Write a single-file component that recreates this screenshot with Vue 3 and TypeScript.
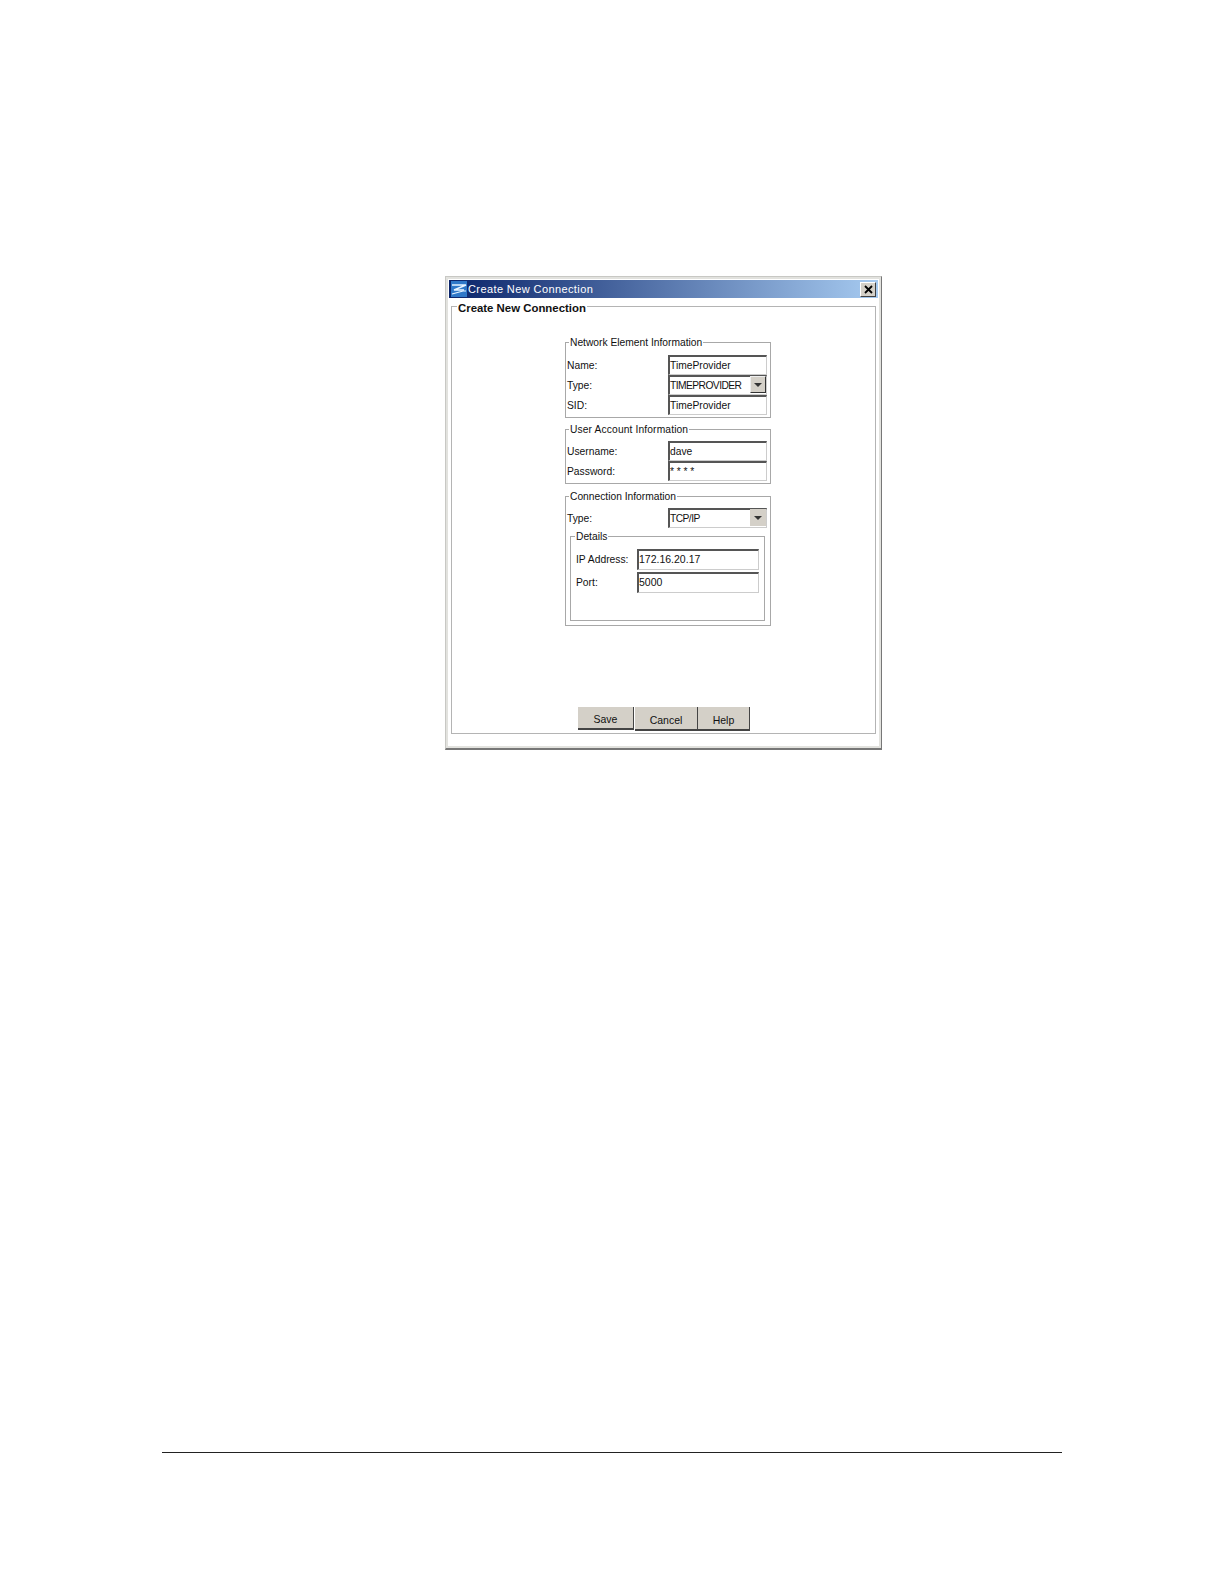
<script setup lang="ts">
const neRows = [
  { label: 'Name:', value: 'TimeProvider' },
  { label: 'Type:', value: 'TIMEPROVIDER', select: true },
  { label: 'SID:', value: 'TimeProvider' },
]
const userRows = [
  { label: 'Username:', value: 'dave' },
  { label: 'Password:', value: '****', stars: true },
]
const detailRows = [
  { label: 'IP Address:', value: '172.16.20.17' },
  { label: 'Port:', value: '5000' },
]
</script>

<template>
  <div class="page">
    <div class="dialog">
      <div class="titlebar">
        <svg class="logo" width="16" height="16" viewBox="0 0 16 16">
          <rect width="16" height="16" fill="#2f78c8" />
          <path d="M1 4H15L3 9H13" fill="none" stroke="#e8f4ff" stroke-width="1.4" />
          <path d="M1 13L12 10H15" fill="none" stroke="#e8f4ff" stroke-width="1.2" />
        </svg>
        <span class="title">Create New Connection</span>
        <div class="close">
          <svg width="9" height="9" viewBox="0 0 9 9">
            <path d="M1 1L8 8M8 1L1 8" stroke="#000" stroke-width="1.8" />
          </svg>
        </div>
      </div>
      <fieldset class="panel">
        <legend class="panel-legend"><span>Create New Connection</span></legend>
        <div class="form">
          <fieldset class="group ne">
            <legend>Network Element Information</legend>
            <div v-for="r in neRows" :key="r.label" class="row">
              <span class="label">{{ r.label }}</span>
              <div class="field">
                <span :class="{ caps: r.select }">{{ r.value }}</span>
                <div v-if="r.select" class="arrow dark"><i /></div>
              </div>
            </div>
          </fieldset>
          <fieldset class="group user">
            <legend>User Account Information</legend>
            <div v-for="r in userRows" :key="r.label" class="row">
              <span class="label">{{ r.label }}</span>
              <div class="field"><span :class="{ stars: r.stars }">{{ r.value }}</span></div>
            </div>
          </fieldset>
          <fieldset class="group conn">
            <legend>Connection Information</legend>
            <div class="row">
              <span class="label">Type:</span>
              <div class="field">
                <span class="caps">TCP/IP</span>
                <div class="arrow"><i /></div>
              </div>
            </div>
            <fieldset class="details">
              <legend>Details</legend>
              <div v-for="r in detailRows" :key="r.label" class="row drow">
                <span class="dlabel">{{ r.label }}</span>
                <div class="field dfield"><span>{{ r.value }}</span></div>
              </div>
            </fieldset>
          </fieldset>
        </div>
        <div class="buttons">
          <div class="btn save">Save</div>
          <div class="btn cancel">Cancel</div>
          <div class="btn help">Help</div>
        </div>
      </fieldset>
    </div>
    <div class="rule"></div>
  </div>
</template>

<style>
html, body { margin: 0; background: #fff; }
</style>

<style scoped>
.page {
  width: 1224px;
  height: 1584px;
  background: #fff;
  box-sizing: border-box;
  padding-top: 276px;
  font-family: "Liberation Sans", Arial, sans-serif;
  color: #111;
}
.dialog {
  width: 437px;
  height: 474px;
  margin-left: 445px;
  box-sizing: border-box;
  border: 1px solid #c8c8c4;
  border-right-color: #777;
  border-bottom: 2px solid #777;
  box-shadow: inset 0 0 0 2px #e2e2de;
  padding: 3px;
  background: #fff;
}
.titlebar {
  height: 18px;
  display: flex;
  align-items: center;
  background: linear-gradient(90deg, #0a246a, #a6caf0);
  color: #fff;
  font-size: 11px;
  padding-left: 2px;
  padding-right: 2px;
}
.logo { flex: none; }
.title { margin-left: 1px; letter-spacing: 0.4px; }
.close {
  margin-left: auto;
  width: 16px;
  height: 15px;
  background: #d4d0c8;
  border: 1px solid;
  border-color: #fff #404040 #404040 #fff;
  box-sizing: border-box;
  display: flex;
  align-items: center;
  justify-content: center;
}
.panel {
  margin: 0 0 0 2px;
  padding: 0;
  width: 425px;
  height: 435px;
  box-sizing: border-box;
  border: 1px solid #b4b4b4;
  position: relative;
  top: 1px;
}
.panel-legend {
  font-size: 11.4px;
  font-weight: 700;
  padding: 0 1px;
  margin-left: 5px;
  line-height: 14px;
}
.panel-legend span { position: relative; top: 2px; }
.form { margin-left: 113px; width: 206px; padding-top: 23px; }
fieldset { min-width: 0; }
.group {
  margin: 0;
  padding: 0;
  border: 1px solid #a8a8a8;
  box-sizing: border-box;
  width: 206px;
}
.group > legend, .details > legend {
  font-size: 10.25px;
  padding: 0 1px;
  margin-left: 3px;
  line-height: 13px;
}
.user > legend { letter-spacing: 0.13px; }
.details > legend { margin-left: 4px; }
.ne { height: 82px; padding-top: 6px; margin-bottom: 5px; }
.user { height: 61px; padding-top: 5px; margin-bottom: 6px; }
.conn { height: 136px; padding-top: 5px; }
.row { display: flex; align-items: center; height: 20px; }
.label { width: 102px; padding-left: 1px; font-size: 10.3px; box-sizing: border-box; }
.field {
  width: 99px;
  height: 20px;
  box-sizing: border-box;
  border-style: solid;
  border-width: 2px 1px 1px 2px;
  border-color: #555 #ccc #ccc #555;
  background: #fff;
  font-size: 10.25px;
  line-height: 17px;
  display: flex;
  justify-content: space-between;
}
.caps { letter-spacing: -0.55px; }
.stars { letter-spacing: 2.8px; }
.arrow {
  width: 16px;
  height: 17px;
  box-sizing: border-box;
  background: #d4d0c8;
  display: flex;
  align-items: center;
  justify-content: center;
  margin-top: -1px;
}
.arrow.dark { border: 1px solid; border-color: #eee #333 #333 #eee; }
.arrow i {
  width: 0;
  height: 0;
  border-left: 4px solid transparent;
  border-right: 4px solid transparent;
  border-top: 4px solid #333;
}
.details {
  margin: 2px 0 0 4px;
  padding: 5px 0 0;
  width: 195px;
  height: 91px;
  box-sizing: border-box;
  border: 1px solid #a8a8a8;
}
.drow { height: 23px; }
.dlabel { width: 66px; padding-left: 5px; font-size: 10.3px; box-sizing: border-box; }
.dfield { width: 122px; height: 21px; font-size: 10.5px; }
.buttons {
  position: absolute;
  left: 126px;
  top: 394px;
  display: flex;
  align-items: flex-start;
}
.btn {
  background: #d4d0c8;
  border-right: 1px solid #444;
  border-bottom: 2px solid #444;
  box-sizing: border-box;
  height: 23px;
  font-size: 10.5px;
  text-align: center;
  line-height: 24px;
}
.save { width: 56px; height: 23px; }
.cancel { width: 63px; height: 24px; margin-left: 1px; line-height: 27px; }
.help { width: 52px; height: 24px; line-height: 27px; }
.rule {
  position: absolute;
  left: 162px;
  top: 1452px;
  width: 900px;
  height: 1px;
  background: #222;
}
</style>
